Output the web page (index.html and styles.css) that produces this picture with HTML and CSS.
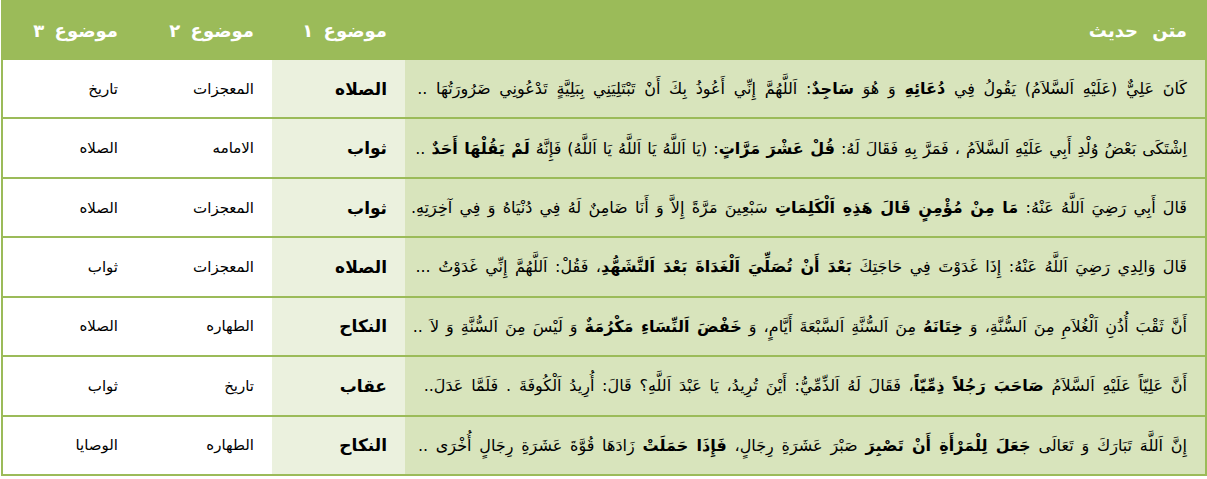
FILE: index.html
```html
<!DOCTYPE html>
<html lang="ar" dir="rtl">
<head>
<meta charset="utf-8">
<link rel="stylesheet" href="styles.css">
</head>
<body>
<table class="hadith">
  <colgroup>
    <col class="c-text"><col class="c-t1"><col class="c-t2"><col class="c-t3">
  </colgroup>
  <thead>
    <tr><th>متن حديث</th><th>موضوع ۱</th><th>موضوع ۲</th><th>موضوع ۳</th></tr>
  </thead>
  <tbody>
    <tr>
      <td class="txt ws-wide">كَانَ عَلِيٌّ (عَلَيْهِ اَلسَّلاَمُ) يَقُولُ فِي <b>دُعَائِهِ</b> وَ هُوَ <b>سَاجِدٌ</b>: اَللَّهُمَّ إِنِّي أَعُوذُ بِكَ أَنْ تَبْتَلِيَنِي بِبَلِيَّةٍ تَدْعُونِي ضَرُورَتُهَا ..</td>
      <td class="t1">الصلاه</td><td>المعجزات</td><td>تاريخ</td>
    </tr>
    <tr>
      <td class="txt ws-tight">اِشْتَكَى بَعْضُ وُلْدِ أَبِي عَلَيْهِ اَلسَّلاَمُ ، فَمَرَّ بِهِ فَقَالَ لَهُ: <b>قُلْ عَشْرَ مَرَّاتٍ</b>: (يَا اَللَّهُ يَا اَللَّهُ يَا اَللَّهُ) فَإِنَّهُ <b>لَمْ يَقُلْهَا أَحَدٌ</b> ..</td>
      <td class="t1">ثواب</td><td>الامامه</td><td>الصلاه</td>
    </tr>
    <tr>
      <td class="txt ws-mid">قَالَ أَبِي رَضِيَ اَللَّهُ عَنْهُ: <b>مَا مِنْ مُؤْمِنٍ قَالَ هَذِهِ اَلْكَلِمَاتِ</b> سَبْعِينَ مَرَّةً إِلاَّ وَ أَنَا ضَامِنٌ لَهُ فِي دُنْيَاهُ وَ فِي آخِرَتِهِ.</td>
      <td class="t1">ثواب</td><td>المعجزات</td><td>الصلاه</td>
    </tr>
    <tr>
      <td class="txt">قَالَ وَالِدِي رَضِيَ اَللَّهُ عَنْهُ: إِذَا غَدَوْتَ فِي حَاجَتِكَ <b>بَعْدَ أَنْ تُصَلِّيَ اَلْغَدَاةَ بَعْدَ اَلتَّشَهُّدِ</b>، فَقُلْ: اَللَّهُمَّ إِنِّي غَدَوْتُ ...</td>
      <td class="t1">الصلاه</td><td>المعجزات</td><td>ثواب</td>
    </tr>
    <tr>
      <td class="txt ws-mid2">أَنَّ ثَقْبَ أُذُنِ اَلْغُلاَمِ مِنَ اَلسُّنَّةِ، وَ <b>خِتَانَهُ</b> مِنَ اَلسُّنَّةِ اَلسَّبْعَةَ أَيَّامٍ، وَ <b>خَفْضَ اَلنِّسَاءِ مَكْرُمَةٌ</b> وَ لَيْسَ مِنَ اَلسُّنَّةِ وَ لاَ ..</td>
      <td class="t1">النكاح</td><td>الطهاره</td><td>الصلاه</td>
    </tr>
    <tr>
      <td class="txt ws-open">أَنَّ عَلِيّاً عَلَيْهِ اَلسَّلاَمُ <b>صَاحَبَ رَجُلاً ذِمِّيّاً</b>، فَقَالَ لَهُ اَلذِّمِّيُّ: أَيْنَ تُرِيدُ، يَا عَبْدَ اَللَّهِ؟ قَالَ: أُرِيدُ اَلْكُوفَةَ . فَلَمَّا عَدَلَ..</td>
      <td class="t1">عقاب</td><td>تاريخ</td><td>ثواب</td>
    </tr>
    <tr>
      <td class="txt ws-open">إِنَّ اَللَّهَ تَبَارَكَ وَ تَعَالَى <b>جَعَلَ لِلْمَرْأَةِ أَنْ تَصْبِرَ</b> صَبْرَ عَشَرَةِ رِجَالٍ، <b>فَإِذَا حَمَلَتْ</b> زَادَهَا قُوَّةَ عَشَرَةِ رِجَالٍ أُخْرَى ..</td>
      <td class="t1">النكاح</td><td>الطهاره</td><td>الوصايا</td>
    </tr>
  </tbody>
</table>
</body>
</html>
```
FILE: styles.css
```css
html, body {
  margin: 0;
  padding: 0;
  background: #ffffff;
}

.hadith {
  width: 1206px;
  border-collapse: separate;
  border-spacing: 0;
  border: 2px solid #9bbb59;
  font-family: "DejaVu Sans", "Liberation Sans", sans-serif;
  font-size: 15px;
  color: #000;
  table-layout: fixed;
}

.c-text { width: 800px; }
.c-t1 { width: 133px; }
.c-t2 { width: 136px; }
.c-t3 { width: 133px; }

.hadith th {
  background: #9bbb59;
  color: #ffffff;
  font-weight: bold;
  font-size: 18px;
  word-spacing: 4px;
  text-align: right;
  height: 56px;
  padding: 0 18px 0 2px;
  vertical-align: middle;
  white-space: nowrap;
}

.hadith th:first-child {
  word-spacing: 8px;
}

.hadith td {
  height: 57.43px;
  padding: 0 18px 0 2px;
  border-top: 2px solid #9bbb59;
  text-align: right;
  vertical-align: middle;
  white-space: nowrap;
  background: #ffffff;
}

.hadith td.txt {
  background: #d8e4bc;
  font-size: 16px;
  word-spacing: 2.4px;
  padding-right: 18px;
}

.hadith td.txt.ws-wide { word-spacing: 3.6px; }
.hadith td.txt.ws-open { word-spacing: 2.7px; }
.hadith td.txt.ws-mid { word-spacing: 2.15px; }
.hadith td.txt.ws-mid2 { word-spacing: 1.95px; }
.hadith td.txt.ws-tight { word-spacing: 0.9px; }

.hadith td.t1 {
  background: #ebf1de;
  font-weight: bold;
  font-size: 17px;
}
```
